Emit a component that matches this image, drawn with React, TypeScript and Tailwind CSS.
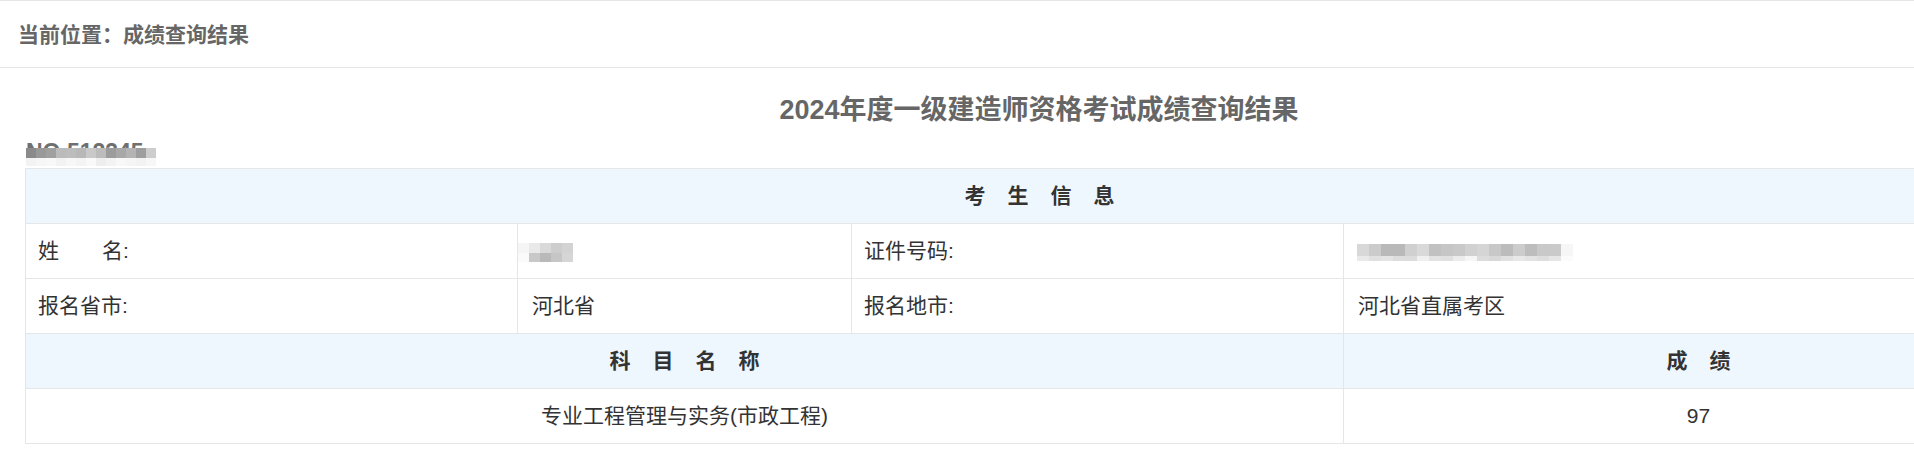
import React from "react";

const font = { fontFamily: '"Liberation Sans", "Noto Sans CJK SC", sans-serif' };

// pixelated blur, as the original screenshot hides personal data with a mosaic
function Mosaic({ rows, size, heights }: { rows: string[][]; size: number; heights: number[] }) {
  return (
    <div className="flex flex-col">
      {rows.map((row, i) => (
        <div key={i} className="flex">
          {row.map((c, j) => (
            <div key={j} style={{ width: size, height: heights[i], background: c }} />
          ))}
        </div>
      ))}
    </div>
  );
}

const noRows = [
  ["#8a8a8a", "#999", "#a0a0a0", "#bbb", "#bdbdbd", "#b8b8b8", "#c9c9c9", "#bcbcbc", "#9c9c9c", "#a8a8a8", "#b4b4b4", "#9e9e9e", "#cdcdcd"],
  ["#f3f3f3", "#f6f6f6", "#f8f8f8", "#f2f2f2", "#f7f7f7", "#f4f4f4", "#f9f9f9", "#eeeeee", "#f3f3f3", "#f8f8f8", "#f5f5f5", "#f2f2f2", "#f7f7f7"],
];

const nameRows = [
  ["#f5f5f5", "#e9e9e9", "#d9d9d9", "#cdcdcd", "#d3d3d3"],
  ["#fafafa", "#c8c8c8", "#b9b9b9", "#c6c6c6", "#d6d6d6"],
];

const idRows = [
  ["#d8d8d8", "#cbcbcb", "#b9b9b9", "#b9b9b9", "#d0d0d0", "#d9d9d9", "#c1c1c1", "#c6c6c6", "#c9c9c9", "#d1d1d1", "#d5d5d5", "#c8c8c8", "#bcbcbc", "#cccccc", "#bdbdbd", "#c9c9c9", "#cacaca", "#f6f6f6"],
  ["#e9e9e9", "#e0e0e0", "#e4e4e4", "#dddddd", "#dcdcdc", "#f0f0f0", "#e3e3e3", "#e0e0e0", "#ececec", "#f6f6f6", "#dcdcdc", "#d8d8d8", "#e1e1e1", "#e8e8e8", "#e3e3e3", "#dedede", "#e6e6e6", "#fbfbfb"],
];

function Spaced({ text }: { text: string }) {
  return (
    <div className="flex justify-center gap-[22px] font-bold text-[#333]">
      {text.split("").map((ch, i) => (
        <span key={i}>{ch}</span>
      ))}
    </div>
  );
}

const cell = "h-[55px] border border-[#e4e6ea] text-[21px] text-[#333] leading-[28px]";
const head = "h-[55px] border border-[#e4e6ea] bg-[#eef6fe] text-[21px] leading-[28px]";

export default function App() {
  return (
    <div className="w-[1914px] h-[471px] overflow-hidden bg-white" style={font}>
      <div className="w-[2078px]">
        {/* breadcrumb */}
        <div className="h-[68px] border-y border-[#e6e6e6] flex items-center pl-[18px] pt-[1px] text-[21px] font-bold text-[#666]">
          当前位置：成绩查询结果
        </div>

        <div className="px-[25px]">
          <h1 className="pt-[22px] text-center text-[27px] font-bold leading-[40px] text-[#666]">
            2024年度一级建造师资格考试成绩查询结果
          </h1>

          <div className="h-[38px] flex items-end">
            <div className="relative ml-[1px] h-[30px] w-[140px]">
              <span className="absolute left-0 top-[2px] text-[23px] font-bold leading-[24px] text-[#6f6f6f]">NO.512345</span>
              <div className="absolute left-0 top-[10px]">
                <Mosaic rows={noRows} size={10} heights={[10, 8]} />
              </div>
            </div>
          </div>

          <table className="w-[2028px] table-fixed border-collapse">
            <colgroup>
              <col className="w-[492px]" />
              <col className="w-[334px]" />
              <col className="w-[492px]" />
              <col className="w-[710px]" />
            </colgroup>
            <tbody>
              <tr>
                <td colSpan={4} className={head}>
                  <Spaced text="考生信息" />
                </td>
              </tr>
              <tr>
                <td className={`${cell} pl-[12px]`}>
                  <span>姓</span>
                  <span className="inline-block w-[43px]" />
                  <span>名:</span>
                </td>
                <td className={`${cell} pl-0`}>
                  <div className="pt-[2px]">
                    <Mosaic rows={nameRows} size={11} heights={[10, 9]} />
                  </div>
                </td>
                <td className={`${cell} pl-[12px]`}>证件号码:</td>
                <td className={`${cell} pl-[13px]`}>
                  <div className="pt-[2px]">
                    <Mosaic rows={idRows} size={12} heights={[12, 5]} />
                  </div>
                </td>
              </tr>
              <tr>
                <td className={`${cell} pl-[12px]`}>报名省市:</td>
                <td className={`${cell} pl-[14px]`}>河北省</td>
                <td className={`${cell} pl-[12px]`}>报名地市:</td>
                <td className={`${cell} pl-[14px]`}>河北省直属考区</td>
              </tr>
              <tr>
                <td colSpan={3} className={head}>
                  <Spaced text="科目名称" />
                </td>
                <td className={head}>
                  <Spaced text="成绩" />
                </td>
              </tr>
              <tr>
                <td colSpan={3} className={`${cell} text-center`}>
                  专业工程管理与实务(市政工程)
                </td>
                <td className={`${cell} text-center`}>97</td>
              </tr>
            </tbody>
          </table>
        </div>
      </div>
    </div>
  );
}
